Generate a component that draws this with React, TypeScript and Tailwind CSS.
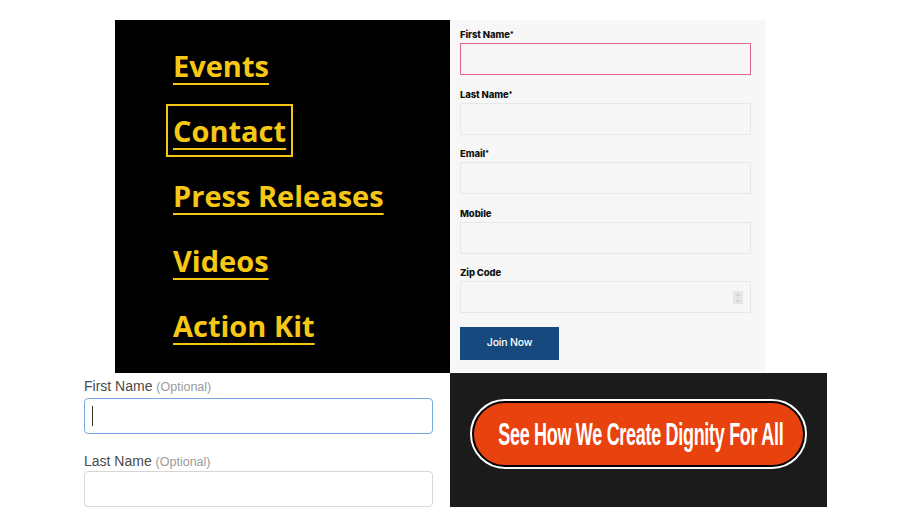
import { ChevronUp, ChevronDown } from 'lucide-react';

const navItems = ['Events', 'Contact', 'Press Releases', 'Videos', 'Action Kit'];

const formFields = [
  { label: 'First Name', required: true, invalid: true },
  { label: 'Last Name', required: true },
  { label: 'Email', required: true },
  { label: 'Mobile' },
  { label: 'Zip Code', spinner: true },
];

function NavPanel() {
  return (
    <div className="w-[335px] h-[353px] shrink-0 bg-black pt-[19px] pl-[51px] flex flex-col items-start gap-[12px]">
      {navItems.map((item) => (
        <a
          key={item}
          className={`inline-block border-2 px-[5px] py-[4px] text-[29px] leading-[41px] font-bold text-[#f7c715] underline decoration-2 underline-offset-[6px] ${
            item === 'Contact' ? 'border-[#f7c715]' : 'border-transparent'
          }`}
          style={{ fontFamily: '"Open Sans", sans-serif' }}
        >
          {item}
        </a>
      ))}
    </div>
  );
}

function SignupForm() {
  return (
    <div
      className="w-[315px] h-[352px] shrink-0 bg-[#f7f7f7] pt-[9px] pl-[10px]"
      style={{ fontFamily: 'Inter, sans-serif' }}
    >
      {formFields.map((f) => (
        <div key={f.label} className="mb-[13.5px]">
          <label className="block text-[9.5px] leading-[12px] font-extrabold text-[#111] tracking-[-0.1px] mb-[2px]">
            {f.label}
            {f.required && <span className="text-[7px] align-top">*</span>}
          </label>
          <div
            className={`relative w-[291px] h-[32px] border bg-[#f7f7f7] ${
              f.invalid ? 'border-[#de6686]' : 'border-[#e8e8e8]'
            }`}
          >
            {f.spinner && (
              <div className="absolute right-[7px] top-[9px] w-[10px] h-[13px] bg-[#e6e6e6] flex flex-col items-center justify-center text-[#999]">
                <ChevronUp className="w-[8px] h-[6px]" strokeWidth={2} />
                <ChevronDown className="w-[8px] h-[6px]" strokeWidth={2} />
              </div>
            )}
          </div>
        </div>
      ))}
      <button className="w-[99px] h-[33px] bg-[#164a7e] text-white text-[10.5px] font-medium tracking-[-0.2px]">
        Join Now
      </button>
    </div>
  );
}

function OptionalFields() {
  return (
    <div
      className="w-[450px] shrink-0 pl-[84px] pt-[5px]"
      style={{ fontFamily: '"Liberation Sans", Arial, sans-serif' }}
    >
      <div className="text-[14px] leading-[16px] text-[#4a4a4a]">
        First Name <span className="text-[12.5px] text-[#9b9b9b]">(Optional)</span>
      </div>
      <div className="mt-[3px] w-[349px] h-[36px] rounded-[4px] border-[1.5px] border-[#74a9e2] bg-white flex items-center">
        <div className="ml-[7px] w-px h-[20px] bg-[#333]" />
      </div>
      <div className="mt-[19px] text-[14px] leading-[16px] text-[#4a4a4a]">
        Last Name <span className="text-[12.5px] text-[#9b9b9b]">(Optional)</span>
      </div>
      <div className="mt-[1px] w-[349px] h-[36px] rounded-[4px] border border-[#d6d6d6] bg-white" />
    </div>
  );
}

function DignityBanner() {
  return (
    <div className="w-[377px] h-[134px] shrink-0 bg-[#1b1b1b] pt-[26px] pl-[20px]">
      <div className="w-[337px] h-[70px] rounded-full border-2 border-white bg-black p-[2px]">
        <div className="w-full h-full rounded-full bg-[#e8430f] flex items-center justify-center overflow-hidden pt-[3px] pl-[5px]">
          <span
            className="inline-block whitespace-nowrap text-[31px] font-bold text-white scale-x-[0.58] tracking-[-0.5px]"
            style={{ fontFamily: '"Liberation Sans", Arial, sans-serif' }}
          >
            See How We Create Dignity For All
          </span>
        </div>
      </div>
    </div>
  );
}

export default function App() {
  return (
    <div className="w-[910px] h-[530px] bg-white overflow-hidden">
      <div className="flex pt-[20px] pl-[115px]">
        <NavPanel />
        <SignupForm />
      </div>
      <div className="flex">
        <OptionalFields />
        <DignityBanner />
      </div>
    </div>
  );
}
